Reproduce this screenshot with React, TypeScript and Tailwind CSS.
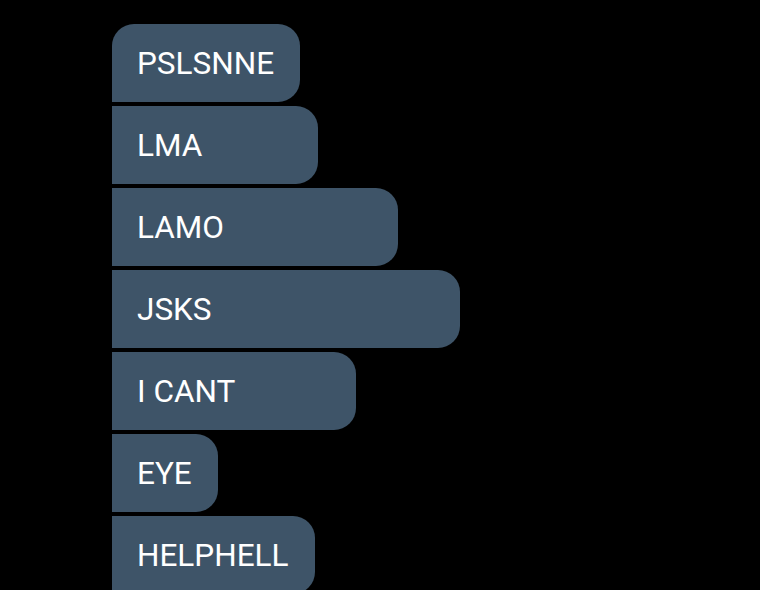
const messages = ["PSLSNNE", "LMA", "LAMO", "JSKS", "I CANT", "EYE", "HELPHELL"]

const widths: Record<string, string> = {
  PSLSNNE: "w-[188px]",
  LMA: "w-[206px]",
  LAMO: "w-[286px]",
  JSKS: "w-[348px]",
  "I CANT": "w-[244px]",
  EYE: "w-[106px]",
  HELPHELL: "w-[203px]",
}

export default function App() {
  return (
    <div className="h-[590px] w-[760px] overflow-hidden bg-black pl-[112px] pt-[24px]">
      <div className="flex flex-col items-start gap-1" style={{ fontFamily: "Roboto, sans-serif" }}>
        {messages.map((m, i) => (
          <div
            key={m}
            className={`flex h-[78px] shrink-0 items-center rounded-r-[22px] bg-[#3e5468] pl-[25px] pt-[2px] text-[31.5px] text-white ${widths[m]} ${i === 0 ? "rounded-tl-[22px]" : ""}`}
          >
            {m}
          </div>
        ))}
      </div>
    </div>
  )
}
